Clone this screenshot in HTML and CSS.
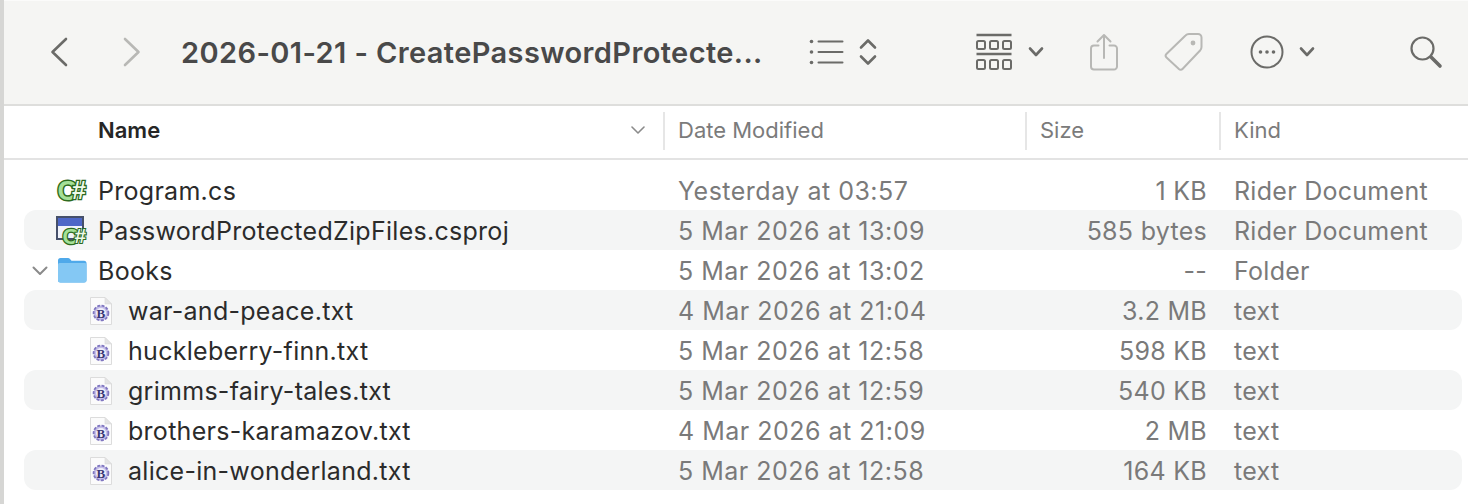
FILE: index.html
```html
<!DOCTYPE html>
<html lang="en">
<head>
<meta charset="utf-8">
<title>Finder</title>
<link rel="stylesheet" href="styles.css">
</head>
<body>
<svg class="defs" width="0" height="0" aria-hidden="true">
  <defs>
    <symbol id="csharp" viewBox="0 0 32 24">
      <text x="1.500" y="21" class="cs-text">C</text>
      <text x="16" y="20" class="cs-hash">#</text>
    </symbol>
    <symbol id="textdoc" viewBox="0 0 24 30">
      <path d="M1.500 1.500H16L22.500 8V28.500H1.500Z" fill="#fbfbfb" stroke="#dcdcdc"/>
      <path d="M16 1.500V8H22.500Z" fill="#e4e4e4" stroke="#d8d8d8" stroke-width=".6"/>
      <circle cx="12" cy="17" r="7.400" fill="#c4bde8" stroke="#7f76c0" stroke-width="1.800" stroke-dasharray="3 1.400"/>
      <circle cx="12" cy="17" r="5" fill="#f1effa"/>
      <text x="12" y="21.500" class="b-text">B</text>
    </symbol>
  </defs>
</svg>
<main class="window">
  <header class="toolbar">
    <svg class="tb back" width="18" height="30" viewBox="0 0 18 30"><path d="M16 2 2.500 15 16 28" class="st dark"/></svg>
    <svg class="tb forward" width="18" height="30" viewBox="0 0 18 30"><path d="M2 2l13.500 13L2 28" class="st light"/></svg>
    <h1 class="title">2026-01-21 - CreatePasswordProtecte...</h1>
    <svg class="tb listview" width="36" height="26" viewBox="0 0 36 26">
      <g class="st thin dark"><path d="M9.500 2.500h24M9.500 13h24M9.500 23.500h24"/></g>
      <g fill="#6b6b68"><circle cx="2.500" cy="2.500" r="1.800"/><circle cx="2.500" cy="13" r="1.800"/><circle cx="2.500" cy="23.500" r="1.800"/></g>
    </svg>
    <svg class="tb updown" width="18" height="28" viewBox="0 0 18 28"><path d="M2 9.500l7-7 7 7M2 18.500l7 7 7-7" class="st mid dark"/></svg>
    <svg class="tb group" width="38" height="38" viewBox="0 0 38 38">
      <path d="M1.500 2h35M1.500 21h35" class="st mid dark butt"/>
      <g fill="none" stroke="#6b6b68" stroke-width="2"><rect x="2" y="8" width="8" height="8" rx="1.500"/><rect x="15" y="8" width="8" height="8" rx="1.500"/><rect x="28" y="8" width="8" height="8" rx="1.500"/><rect x="2" y="27" width="8" height="9" rx="1.500"/><rect x="15" y="27" width="8" height="9" rx="1.500"/><rect x="28" y="27" width="8" height="9" rx="1.500"/></g>
    </svg>
    <svg class="tb groupchev" width="16" height="12" viewBox="0 0 16 12"><path d="M2 2.500l6 6.500 6-6.500" class="st mid dark"/></svg>
    <svg class="tb share" width="30" height="38" viewBox="0 0 30 38">
      <path d="M9.500 12.500H5a3 3 0 0 0-3 3V33.500a3 3 0 0 0 3 3h20a3 3 0 0 0 3-3V15.500a3 3 0 0 0-3-3H20.500" class="st thin light"/>
      <path d="M15 25V2M8.500 8.500L15 2l6.500 6.500" class="st thin light"/>
    </svg>
    <svg class="tb tag" width="40" height="40" viewBox="0 0 40 40">
      <path d="M25 2h9a3.500 3.500 0 0 1 3.500 3.500V15a5 5 0 0 1-1.200 3.200L18.500 37a2.500 2.500 0 0 1-3.600.1L2.500 25.500a2.500 2.500 0 0 1-.1-3.500L21.500 3.500A5 5 0 0 1 25 2Z" class="st thin light"/>
      <circle cx="29" cy="11" r="2.400" fill="#b8b8b5"/>
    </svg>
    <svg class="tb more" width="34" height="34" viewBox="0 0 34 34">
      <circle cx="17" cy="17" r="15.500" fill="none" stroke="#6b6b68" stroke-width="2"/>
      <g fill="#6b6b68"><circle cx="10.500" cy="17" r="1.800"/><circle cx="17" cy="17" r="1.800"/><circle cx="23.500" cy="17" r="1.800"/></g>
    </svg>
    <svg class="tb morechev" width="16" height="12" viewBox="0 0 16 12"><path d="M2 2.500l6 6.500 6-6.500" class="st mid dark"/></svg>
    <svg class="tb search" width="34" height="34" viewBox="0 0 34 34">
      <circle cx="13.500" cy="13.500" r="11" fill="none" stroke="#6b6b68" stroke-width="2.200"/>
      <path d="M22 22l9 9" class="st thick dark"/>
    </svg>
  </header>

  <div class="columns">
    <div class="col col-name"><span class="col-label strong">Name</span>
      <svg class="sort" width="14" height="9" viewBox="0 0 14 9"><path d="M1 1l6 6 6-6" fill="none" stroke="#8b8b8b" stroke-width="1.600" stroke-linecap="round" stroke-linejoin="round"/></svg>
    </div>
    <div class="col col-date"><span class="col-label">Date Modified</span></div>
    <div class="col col-size"><span class="col-label">Size</span></div>
    <div class="col col-kind"><span class="col-label">Kind</span></div>
  </div>

  <section class="list">
    <div class="row">
      <div class="name"><span class="twisty"></span><span class="slot"><svg class="ic-cs" width="32" height="24"><use href="#csharp"/></svg></span><span class="fname">Program.cs</span></div>
      <div class="date">Yesterday at 03:57</div><div class="size">1 KB</div><div class="kind">Rider Document</div>
    </div>
    <div class="row alt">
      <div class="name"><span class="twisty"></span><span class="slot"><span class="proj-icon"><span class="proj-win"></span><svg class="ic-cs-small" width="27" height="20" viewBox="0 0 32 24"><use href="#csharp"/></svg></span></span><span class="fname">PasswordProtectedZipFiles.csproj</span></div>
      <div class="date">5 Mar 2026 at 13:09</div><div class="size">585 bytes</div><div class="kind">Rider Document</div>
    </div>
    <div class="row">
      <div class="name"><span class="twisty"><svg width="16" height="10" viewBox="0 0 16 10"><path d="M1.500 1.500 8 8l6.500-6.500" fill="none" stroke="#8a8a8a" stroke-width="2" stroke-linecap="round" stroke-linejoin="round"/></svg></span><span class="slot"><svg class="ic-folder" width="30" height="28" viewBox="0 0 30 28"><path d="M1 4.500A2.500 2.500 0 0 1 3.500 2h7.500a2.500 2.500 0 0 1 2 1l1.500 1.800H27a2.500 2.500 0 0 1 2.500 2.500V24a2.500 2.500 0 0 1-2.500 2.500H3.500A2.500 2.500 0 0 1 1 24Z" fill="#4fa9ea"/><path d="M1 8.500A1.500 1.500 0 0 1 2.500 7H28a1.500 1.500 0 0 1 1.500 1.500V24a2.500 2.500 0 0 1-2.500 2.500H3.500A2.500 2.500 0 0 1 1 24Z" fill="#84c8f4"/></svg></span><span class="fname">Books</span></div>
      <div class="date">5 Mar 2026 at 13:02</div><div class="size">--</div><div class="kind">Folder</div>
    </div>
    <div class="row alt child">
      <div class="name"><span class="twisty"></span><span class="slot"><svg class="ic-doc" width="24" height="30"><use href="#textdoc"/></svg></span><span class="fname">war-and-peace.txt</span></div>
      <div class="date">4 Mar 2026 at 21:04</div><div class="size">3.2 MB</div><div class="kind">text</div>
    </div>
    <div class="row child">
      <div class="name"><span class="twisty"></span><span class="slot"><svg class="ic-doc" width="24" height="30"><use href="#textdoc"/></svg></span><span class="fname">huckleberry-finn.txt</span></div>
      <div class="date">5 Mar 2026 at 12:58</div><div class="size">598 KB</div><div class="kind">text</div>
    </div>
    <div class="row alt child">
      <div class="name"><span class="twisty"></span><span class="slot"><svg class="ic-doc" width="24" height="30"><use href="#textdoc"/></svg></span><span class="fname">grimms-fairy-tales.txt</span></div>
      <div class="date">5 Mar 2026 at 12:59</div><div class="size">540 KB</div><div class="kind">text</div>
    </div>
    <div class="row child">
      <div class="name"><span class="twisty"></span><span class="slot"><svg class="ic-doc" width="24" height="30"><use href="#textdoc"/></svg></span><span class="fname">brothers-karamazov.txt</span></div>
      <div class="date">4 Mar 2026 at 21:09</div><div class="size">2 MB</div><div class="kind">text</div>
    </div>
    <div class="row alt child">
      <div class="name"><span class="twisty"></span><span class="slot"><svg class="ic-doc" width="24" height="30"><use href="#textdoc"/></svg></span><span class="fname">alice-in-wonderland.txt</span></div>
      <div class="date">5 Mar 2026 at 12:58</div><div class="size">164 KB</div><div class="kind">text</div>
    </div>
  </section>
</main>
</body>
</html>
```

FILE: styles.css
```css
* { box-sizing: border-box; }
html, body { margin: 0; padding: 0; }
body {
  width: 1468px;
  height: 504px;
  overflow: hidden;
  background: #fff;
  font-family: Inter, "Liberation Sans", sans-serif;
  color: #2a2a2a;
}
.defs { display: block; height: 0; }
.window {
  height: 504px;
  border-left: 4px solid #d6d6d4;
  display: flex;
  flex-direction: column;
}
.toolbar {
  flex: 0 0 106px;
  background: #f5f5f3;
  border-bottom: 2px solid #dededc;
  border-top: 1px solid #fbfbfa;
  padding-bottom: 1px;
  display: flex;
  align-items: center;
}
.tb { flex: none; display: block; }
.st { fill: none; stroke-linecap: round; stroke-linejoin: round; stroke-width: 2.6; }
.st.thin { stroke-width: 2; }
.st.mid { stroke-width: 2.6; }
.st.thick { stroke-width: 3.6; }
.st.butt { stroke-linecap: butt; }
.st.dark { stroke: #6b6b68; }
.st.light { stroke: #b8b8b5; }
.back { margin-left: 46px; }
.forward { margin-left: 55px; }
.title {
  flex: none;
  width: 590px;
  margin: 1px 0 0 40px;
  font-size: 29px;
  font-weight: 600;
  letter-spacing: 0.39px;
  color: #494949;
  white-space: nowrap;
}
.listview { margin-left: 38px; }
.updown { margin-left: 14px; }
.group { margin-left: 98px; }
.groupchev { margin-left: 15px; }
.share { margin-left: 45px; }
.tag { margin-left: 45px; }
.more { margin-left: 46px; }
.morechev { margin-left: 15px; }
.search { margin-left: 94px; }

.columns {
  flex: 0 0 54px;
  display: grid;
  grid-template-columns: 659px 362px 194px 1fr;
  border-bottom: 2px solid #e3e3e3;
  align-items: stretch;
  padding: 6px 0 8px;
}
.col {
  display: flex;
  align-items: center;
  font-size: 22px;
  color: #7b7b7b;
  padding-bottom: 2px;
}
.col-name { padding-left: 94px; padding-right: 18px; justify-content: space-between; }
.col-date, .col-size, .col-kind { border-left: 2px solid #e6e6e6; padding-left: 13px; }
.col-label.strong { color: #262626; font-weight: 600; }
.sort { flex: none; }

.list { padding: 10px 6px 0 20px; flex: 1; }
.row {
  height: 40px;
  padding-top: 1px;
  display: grid;
  grid-template-columns: 639px 362px 194px 1fr;
  align-items: center;
  font-size: 25px;
  letter-spacing: 0.28px;
  border-radius: 12px;
  color: #7a7a7a;
}
.row.alt { background: #f4f5f5; }
.name { display: flex; align-items: center; color: #2b2b2b; white-space: nowrap; }
.twisty { flex: none; width: 24px; margin-left: 4px; display: flex; justify-content: center; }
.slot { flex: none; width: 46px; display: flex; align-items: center; }
.child .name .slot { width: 76px; }
.fname { display: block; }
.date { padding-left: 15px; letter-spacing: 0.5px; }
.size { text-align: right; padding-right: 12px; }
.kind { padding-left: 15px; }

.ic-cs { margin-left: 4px; display: block; }
.ic-folder { margin-left: 5px; margin-top: -2px; display: block; }
.ic-doc { margin-left: 37px; display: block; }
.proj-icon { position: relative; display: block; width: 33px; height: 30px; margin-left: 3px; }
.proj-win {
  position: absolute;
  left: 1px; top: 0;
  width: 28px; height: 24px;
  border: 2px solid #46506a;
  background: linear-gradient(#4e67c7 0 8px, #f0f3fb 8px);
}
.ic-cs-small { position: absolute; right: 0; bottom: 0; display: block; }
.cs-text {
  font-family: "Liberation Sans", sans-serif;
  font-weight: 700;
  font-size: 27px;
  fill: #a5e098;
  stroke: #2c6a20;
  stroke-width: 3px;
  paint-order: stroke;
}
.cs-hash {
  font-family: "Liberation Sans", sans-serif;
  font-weight: 700;
  font-size: 25px;
  fill: #eef9e9;
  stroke: #2c6a20;
  stroke-width: 2.600px;
  paint-order: stroke;
}
.b-text {
  font-family: "Liberation Serif", serif;
  font-weight: 700;
  font-size: 13px;
  text-anchor: middle;
  fill: #3a3775;
}
```
